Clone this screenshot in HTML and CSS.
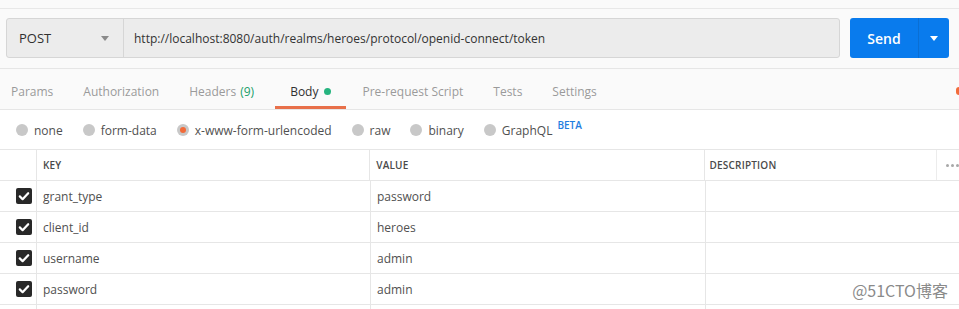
FILE: index.html
```html
<!DOCTYPE html>
<html lang="en">
<head>
    <meta charset="UTF-8">
    <title>Request</title>
    <link rel="stylesheet" href="styles.css">
</head>
<body>
    <div class="top-strip"></div>
    <div class="request-bar">
        <div class="url-group">
            <div class="method">
                <span>POST</span>
                <span class="caret"></span>
            </div>
            <div class="url">http://localhost:8080/auth/realms/heroes/protocol/openid-connect/token</div>
        </div>
        <div class="send">
            <span class="send-label">Send</span>
            <span class="send-more"><span class="caret white"></span></span>
        </div>
    </div>

    <div class="tabs">
        <span class="tab">Params</span>
        <span class="tab">Authorization</span>
        <span class="tab">Headers <span class="count">(9)</span></span>
        <span class="tab active">Body <span class="dot"></span></span>
        <span class="tab">Pre-request Script</span>
        <span class="tab">Tests</span>
        <span class="tab">Settings</span>
        <span class="edge-mark"></span>
    </div>

    <div class="body-types">
        <label class="radio"><span class="circle"></span>none</label>
        <label class="radio"><span class="circle"></span>form-data</label>
        <label class="radio"><span class="circle on"></span>x-www-form-urlencoded</label>
        <label class="radio"><span class="circle"></span>raw</label>
        <label class="radio"><span class="circle"></span>binary</label>
        <label class="radio"><span class="circle"></span>GraphQL<sup class="beta">BETA</sup></label>
    </div>

    <div class="kv-table">
        <div class="row head">
            <div class="cell check"></div>
            <div class="cell key">KEY</div>
            <div class="cell value">VALUE</div>
            <div class="cell desc">DESCRIPTION</div>
            <div class="cell more"><i></i><i></i><i></i></div>
        </div>
        <div class="row">
            <div class="cell check"><span class="box"><svg viewBox="0 0 16 16"><path d="M3.8 8.4l2.8 2.8 5.6-6" /></svg></span></div>
            <div class="cell key">grant_type</div>
            <div class="cell value">password</div>
            <div class="cell desc"></div>
        </div>
        <div class="row">
            <div class="cell check"><span class="box"><svg viewBox="0 0 16 16"><path d="M3.8 8.4l2.8 2.8 5.6-6" /></svg></span></div>
            <div class="cell key">client_id</div>
            <div class="cell value">heroes</div>
            <div class="cell desc"></div>
        </div>
        <div class="row">
            <div class="cell check"><span class="box"><svg viewBox="0 0 16 16"><path d="M3.8 8.4l2.8 2.8 5.6-6" /></svg></span></div>
            <div class="cell key">username</div>
            <div class="cell value">admin</div>
            <div class="cell desc"></div>
        </div>
        <div class="row">
            <div class="cell check"><span class="box"><svg viewBox="0 0 16 16"><path d="M3.8 8.4l2.8 2.8 5.6-6" /></svg></span></div>
            <div class="cell key">password</div>
            <div class="cell value">admin</div>
            <div class="cell desc"></div>
        </div>
        <div class="row stub">
            <div class="cell check"></div>
            <div class="cell key"></div>
            <div class="cell value"></div>
            <div class="cell desc"></div>
        </div>
    </div>

    <span class="watermark">@51CTO博客</span>
</body>
</html>
```

FILE: styles.css
```css
* { box-sizing: border-box; }
html, body { overflow: hidden; }
body {
    position: relative;
    margin: 0;
    width: 959px;
    height: 309px;
    font-family: 'Open Sans', sans-serif;
    font-size: 12px;
    color: #505050;
    background: #fff;
}
.top-strip {
    height: 9px;
    background: #fafafa;
    border-bottom: 1px solid #e8e8e8;
}
.request-bar {
    display: flex;
    background: #fafafa;
    padding: 9px 10px 10px 6px;
    gap: 10px;
    border-bottom: 1px solid #e6e6e6;
}
.url-group {
    flex: 1;
    display: flex;
    height: 40px;
    background: #ececec;
    border: 1px solid #d6d6d6;
    border-radius: 3px;
}
.method {
    width: 117px;
    display: flex;
    align-items: center;
    justify-content: space-between;
    padding: 0 14px 0 12px;
    border-right: 1px solid #d6d6d6;
    font-size: 13px;
    color: #303030;
}
.caret {
    width: 0;
    height: 0;
    border-left: 4px solid transparent;
    border-right: 4px solid transparent;
    border-top: 5px solid #8a8a8a;
}
.caret.white { border-top-color: #fff; }
.url {
    display: flex;
    align-items: center;
    padding-left: 10px;
    font-size: 12px;
    color: #333;
}
.send {
    width: 99px;
    height: 40px;
    display: flex;
    background: #097bed;
    border-radius: 3px;
    color: #fff;
}
.send-label {
    width: 69px;
    display: flex;
    align-items: center;
    justify-content: center;
    font-size: 14px;
    font-weight: 600;
    border-right: 1px solid #0a6fd4;
}
.send-more {
    flex: 1;
    display: flex;
    align-items: center;
    justify-content: center;
}
.tabs {
    position: relative;
    display: flex;
    height: 41px;
    background: #fafafa;
    border-bottom: 1px solid #e6e6e6;
}
.tab {
    display: flex;
    align-items: center;
    gap: 4px;
    padding: 7px 15px 0;
    font-size: 12px;
    color: #9a9a9a;
    border-bottom: 3px solid transparent;
}
.tab:first-child { padding-left: 11px; }
.tab .count { color: #20a06a; }
.tab.active {
    margin-left: 6px;
    margin-right: 1px;
    color: #303030;
    border-bottom-color: #e8704a;
}
.dot {
    width: 7px;
    height: 7px;
    margin-left: 2px;
    border-radius: 50%;
    background: #26b47f;
}
.edge-mark {
    position: absolute;
    right: 0;
    top: 18px;
    width: 3px;
    height: 8px;
    border-radius: 3px 0 0 3px;
    background: #f26b3a;
}
.body-types {
    display: flex;
    align-items: center;
    height: 39px;
    padding: 1px 0 0 16px;
    gap: 20px;
    font-size: 12px;
    color: #505050;
}
.radio {
    display: flex;
    align-items: center;
    gap: 6px;
}
.circle {
    width: 12px;
    height: 12px;
    border-radius: 50%;
    background: #c8c8c8;
    display: inline-flex;
    align-items: center;
    justify-content: center;
}
.circle.on::after {
    content: "";
    width: 6px;
    height: 6px;
    border-radius: 50%;
    background: #f26b3a;
}
.beta {
    align-self: flex-start;
    margin-top: -4px;
    margin-left: -1px;
    font-size: 10px;
    font-weight: 600;
    color: #1f7ee0;
}
.kv-table {
    border-top: 1px solid #e6e6e6;
}
.row {
    display: flex;
    height: 31px;
    border-bottom: 1px solid #e6e6e6;
}
.row.stub { height: 6px; border-bottom: none; }
.cell {
    display: flex;
    align-items: center;
    height: 100%;
    padding-left: 6px;
    font-size: 12px;
    color: #505050;
}
.head .cell {
    font-size: 10px;
    font-weight: 600;
    color: #4a4a4a;
    letter-spacing: 0.2px;
}
.check {
    width: 37px;
    padding-left: 16px;
    border-right: 1px solid #e6e6e6;
}
.key { width: 334px; border-right: 1px solid #e6e6e6; }
.value { width: 335px; border-right: 1px solid #e6e6e6; }
.desc { width: 233px; padding-left: 5px; }
.head .desc { border-right: 1px solid #ececec; }
.more {
    flex: 1;
    gap: 2px;
    padding-left: 9px;
}
.more i {
    flex: none;
    width: 3px;
    height: 3px;
    border-radius: 50%;
    background: #a8a8a8;
}
.box {
    width: 16px;
    height: 16px;
    border-radius: 2px;
    background: #282828;
}
.box svg {
    width: 16px;
    height: 16px;
    fill: none;
    stroke: #fff;
    stroke-width: 2.2;
    stroke-linecap: round;
    stroke-linejoin: round;
}
.watermark {
    position: absolute;
    right: 11px;
    bottom: 9px;
    font-family: 'Noto Sans CJK SC', sans-serif;
    font-size: 16px;
    line-height: 20px;
    color: #8a8a8a;
    white-space: nowrap;
}
```
